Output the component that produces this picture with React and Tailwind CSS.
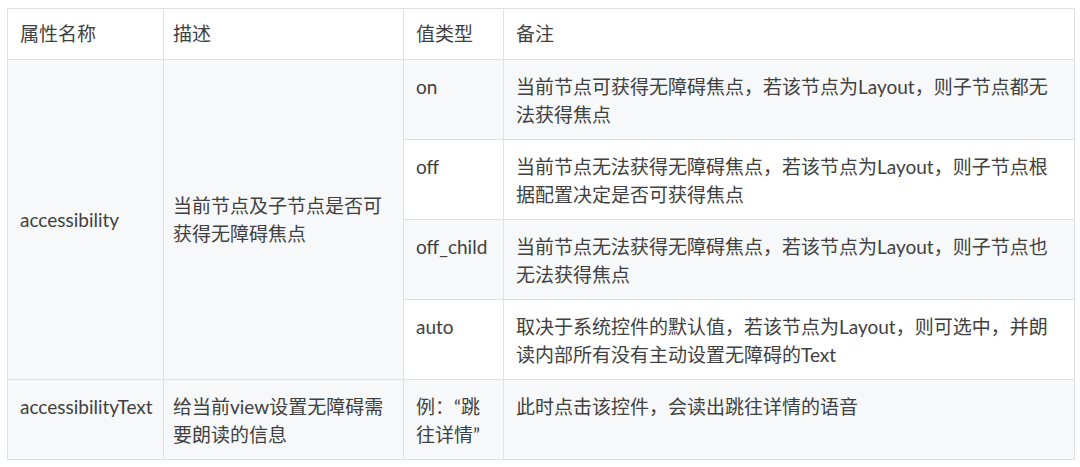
const rows = [
  {
    value: "on",
    note: ["当前节点可获得无障碍焦点，若该节点为Layout，则子节点都无", "法获得焦点"],
  },
  {
    value: "off",
    note: ["当前节点无法获得无障碍焦点，若该节点为Layout，则子节点根", "据配置决定是否可获得焦点"],
  },
  {
    value: "off_child",
    note: ["当前节点无法获得无障碍焦点，若该节点为Layout，则子节点也", "无法获得焦点"],
  },
  {
    value: "auto",
    note: ["取决于系统控件的默认值，若该节点为Layout，则可选中，并朗", "读内部所有没有主动设置无障碍的Text"],
  },
];

const cell = "border border-[#dfe2e5] px-[12px] pt-[13px] pb-[10px] align-top whitespace-nowrap";

export default function App() {
  return (
    <div
      className="w-[1080px] h-[467px] bg-white pl-[7px] pt-[8px] text-[19px] leading-[28px] text-[#404040]"
      style={{ fontFamily: 'Lato, "Noto Sans CJK SC", sans-serif' }}
    >
      <table className="table-fixed border-collapse w-[1067px]">
        <colgroup>
          <col className="w-[156px]" />
          <col className="w-[240px]" />
          <col className="w-[100px]" />
          <col className="w-[571px]" />
        </colgroup>
        <thead>
          <tr className="h-[51px] bg-white">
            <th className="border border-[#dfe2e5] px-[12px] text-left font-normal align-middle">属性名称</th>
            <th className="border border-[#dfe2e5] pl-[9px] pr-[12px] text-left font-normal align-middle">描述</th>
            <th className="border border-[#dfe2e5] px-[12px] text-left font-normal align-middle">值类型</th>
            <th className="border border-[#dfe2e5] px-[12px] text-left font-normal align-middle">备注</th>
          </tr>
        </thead>
        <tbody>
          {rows.map((r, i) => (
            <tr key={r.value} className={`h-[79px] ${i % 2 === 0 ? "bg-[#f7f8fa]" : "bg-white"}`}>
              {i === 0 && (
                <>
                  <td rowSpan={4} className="border border-[#dfe2e5] px-[12px] align-middle bg-[#f7f8fa]">
                    accessibility
                  </td>
                  <td rowSpan={4} className="border border-[#dfe2e5] pl-[9px] pr-[12px] align-middle bg-[#f7f8fa]">
                    当前节点及子节点是否可
                    <br />
                    获得无障碍焦点
                  </td>
                </>
              )}
              <td className={cell}>{r.value}</td>
              <td className={cell}>
                {r.note[0]}
                <br />
                {r.note[1]}
              </td>
            </tr>
          ))}
          <tr className="h-[79px] bg-[#f7f8fa]">
            <td className={cell}>accessibilityText</td>
            <td className="border border-[#dfe2e5] pl-[9px] pr-[12px] pt-[13px] pb-[10px] align-top whitespace-nowrap">
              给当前view设置无障碍需
              <br />
              要朗读的信息
            </td>
            <td className={cell}>
              例：“跳
              <br />
              往详情”
            </td>
            <td className={cell}>此时点击该控件，会读出跳往详情的语音</td>
          </tr>
        </tbody>
      </table>
    </div>
  );
}
